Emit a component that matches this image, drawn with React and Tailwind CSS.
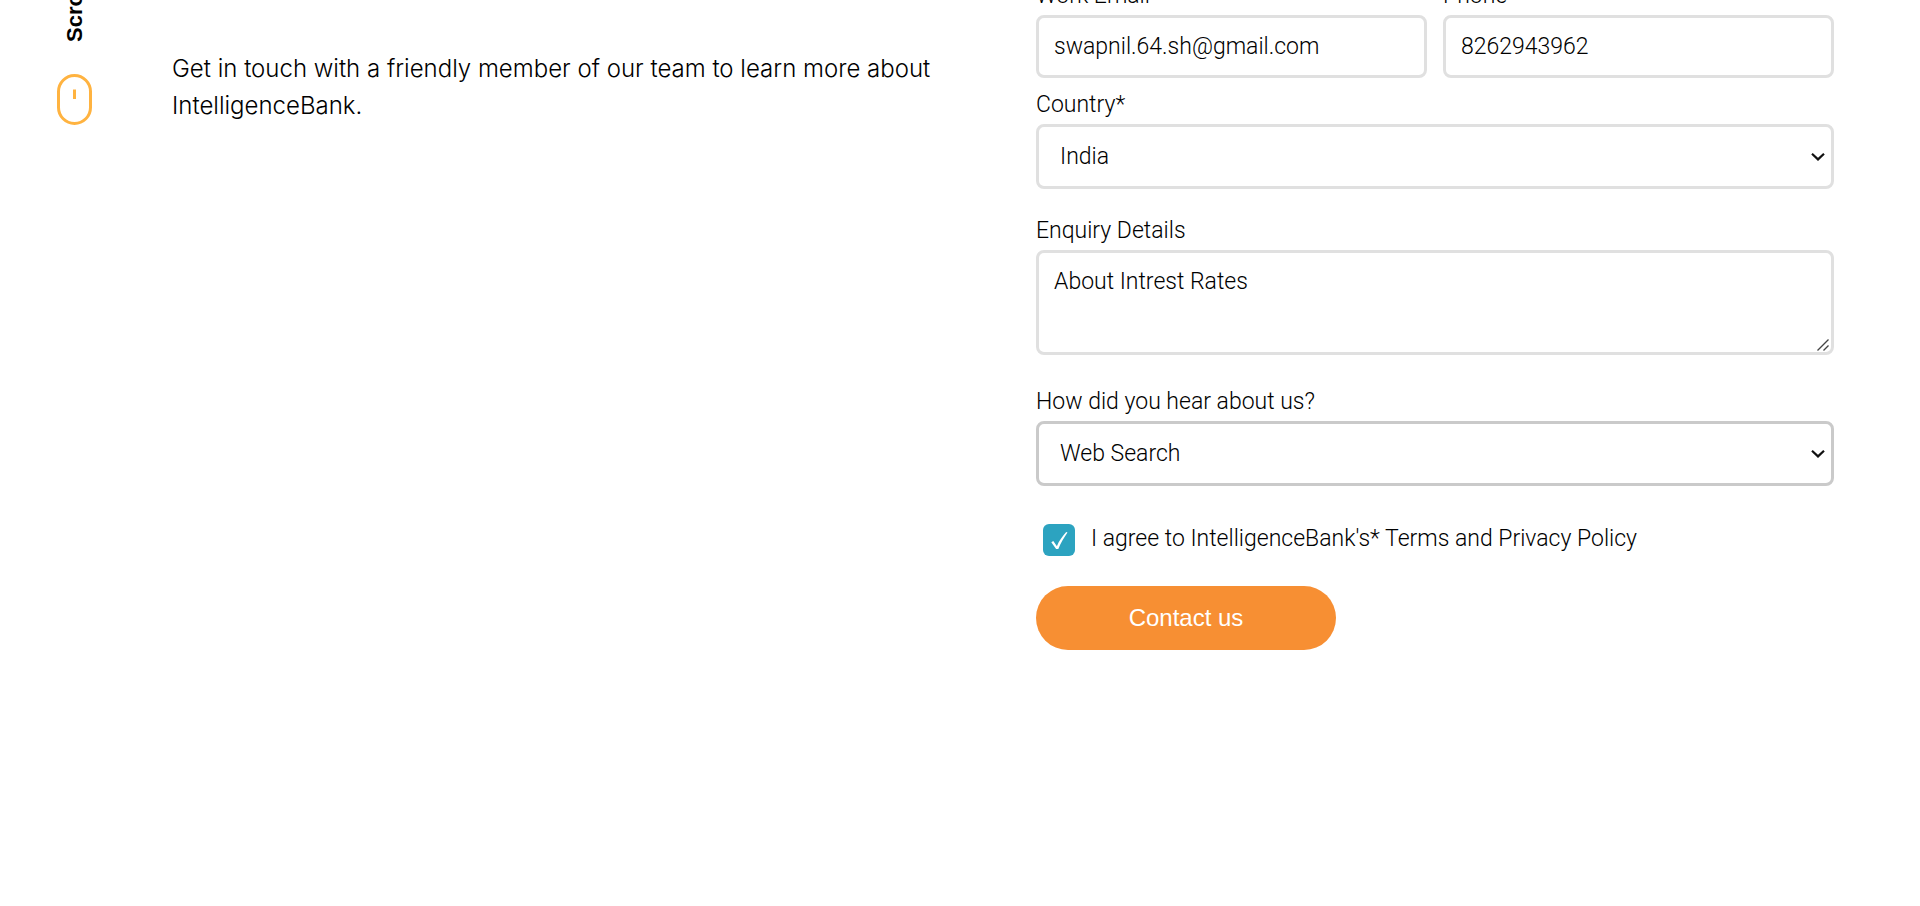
const labelClass = "block h-9 text-[23px] leading-[34px]";
const fieldClass =
  "block w-full rounded-lg border-3 border-[#e0e0e0] bg-white px-[15px] text-[23px] text-black";
const selectClass =
  "col-start-1 row-start-1 block h-[65px] w-full appearance-none rounded-lg border-3 bg-white pt-0.5 pr-10 pl-[21px] text-[23px] text-black";

function ScrollRail() {
  return (
    <a href="#contact" className="-mt-10 flex w-[35px] shrink-0 flex-col items-center gap-8">
      <span className="flex h-[82px] rotate-180 font-['Liberation_Sans',sans-serif] text-[22px] leading-8 font-bold [writing-mode:vertical-rl]">
        Scroll
      </span>
      <svg viewBox="0 0 35 51" className="h-[51px] w-[35px]" fill="none" aria-hidden="true">
        <rect x="1.5" y="1.5" width="32" height="48" rx="16" stroke="#ffb340" strokeWidth="3" />
        <path d="M17.5 15.5v9.5" stroke="#ffb340" strokeWidth="3" />
      </svg>
    </a>
  );
}

function SelectBox({ id, border, children }) {
  return (
    <div className="grid items-center">
      <select id={id} className={`${selectClass} ${border}`}>{children}</select>
      <svg viewBox="0 0 14 8" className="pointer-events-none col-start-1 row-start-1 mr-[9px] h-2 w-3.5 justify-self-end" fill="none" aria-hidden="true">
        <path d="M1 .8l6 5.600L13 .8" stroke="#111" strokeWidth="2.200" />
      </svg>
    </div>
  );
}

function ContactForm() {
  return (
    <form id="contact" className="-mt-[21px] min-w-0 font-light" onSubmit={(e) => e.preventDefault()}>
      <div className="grid grid-cols-2 gap-4">
        <div>
          <label htmlFor="email" className={labelClass}>Work Email*</label>
          <input id="email" type="email" defaultValue="swapnil.64.sh@gmail.com" className={`${fieldClass} h-[63px]`} />
        </div>
        <div>
          <label htmlFor="phone" className={labelClass}>Phone</label>
          <input id="phone" type="tel" defaultValue="8262943962" className={`${fieldClass} h-[63px]`} />
        </div>
      </div>
      <div className="mt-[10px]">
        <label htmlFor="country" className={labelClass}>Country*</label>
        <SelectBox id="country" border="border-[#e0e0e0]">
          <option>India</option>
        </SelectBox>
      </div>
      <div className="mt-[25px]">
        <label htmlFor="details" className={labelClass}>Enquiry Details</label>
        <div className="grid items-end">
          <textarea id="details" defaultValue="About Intrest Rates" className={`${fieldClass} col-start-1 row-start-1 h-[105px] resize-none py-3 leading-[34px]`} />
          <svg viewBox="0 0 12 12" className="pointer-events-none col-start-1 row-start-1 mr-[5px] mb-1 size-3 justify-self-end" fill="none" aria-hidden="true">
            <path d="M.5 11.500l11-11M6.500 11.500l5-5" stroke="#444" strokeWidth="1.400" />
          </svg>
        </div>
      </div>
      <div className="mt-[30px]">
        <label htmlFor="source" className={labelClass}>How did you hear about us?</label>
        <SelectBox id="source" border="border-[#cacaca]">
          <option>Web Search</option>
        </SelectBox>
      </div>
      <div className="mt-[38px] flex items-start gap-4 pl-[7px]">
        <span className="grid size-8 shrink-0">
          <input id="agree" type="checkbox" defaultChecked className="col-start-1 row-start-1 size-8 appearance-none rounded-md bg-[#2ca3c0]" />
          <svg viewBox="0 0 32 32" className="pointer-events-none col-start-1 row-start-1 size-8" fill="none" aria-hidden="true">
            <path d="M8.300 18.200l2-1.200 3.600 5.200C15.900 17 19.500 12 23.200 8l1.300.4C21 13.500 17.500 19 15.300 25h-2.200z" fill="#fff" />
          </svg>
        </span>
        <label htmlFor="agree" className="text-[23px] leading-[30px]">
          I agree to IntelligenceBank's* Terms and Privacy Policy
        </label>
      </div>
      <button type="submit" className="mt-[30px] h-16 w-[300px] rounded-[32px] bg-[#f78f33] font-['Liberation_Sans',sans-serif] text-[24px] text-white">
        Contact us
      </button>
    </form>
  );
}

export default function App() {
  return (
    <main className="flex min-h-screen items-start overflow-hidden bg-white pr-[86px] pl-[57px] font-['Roboto',sans-serif] text-black">
      <ScrollRail />
      <div className="ml-20 grid min-w-0 flex-1 grid-cols-2 gap-[66px]">
        <p className="pt-[50px] font-['Inter',sans-serif] text-[24px] leading-[37px] font-light">
          Get in touch with a friendly member of our team to learn more about IntelligenceBank.
        </p>
        <ContactForm />
      </div>
    </main>
  );
}
